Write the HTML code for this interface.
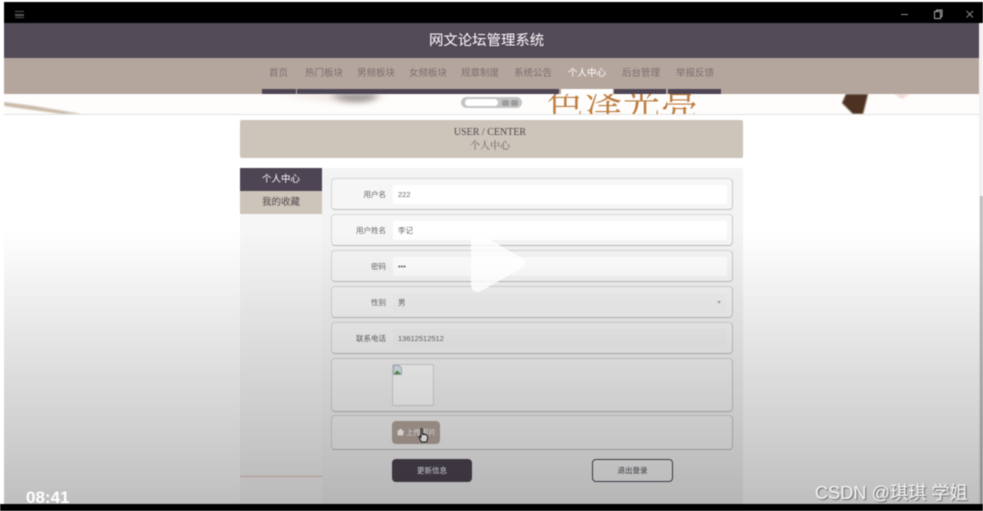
<!DOCTYPE html>
<html lang="zh">
<head>
<meta charset="utf-8">
<title>网文论坛管理系统</title>
<style>
html,body{margin:0;padding:0;width:983px;height:511px;overflow:hidden;background:#fff;font-family:"Liberation Sans","Noto Sans CJK SC",sans-serif}
*{box-sizing:border-box}
.a{position:absolute}
#stage{position:absolute;left:0;top:0;width:983px;height:511px;overflow:hidden;filter:blur(.55px)}
.nav{position:absolute;top:66px;font-size:9.5px;line-height:15px;color:#7a6f70;white-space:nowrap}
.seg{position:absolute;top:89px;height:5px;background:#4d4553}
.row{position:absolute;left:331px;width:402px;border:1.5px solid #d6d6d6;border-bottom-color:#bdbdbd;border-right-color:#c8c8c8;border-radius:4px;background:#f6f6f6}
.lab{position:absolute;left:331px;width:55px;text-align:right;font-size:7.500px;line-height:12px;color:#666;white-space:nowrap}
.inp{position:absolute;left:393px;width:334px;height:19px;background:#fff;font-size:7.500px;line-height:19px;color:#666;padding-left:5px}
.in2{background:#f3f3f3}
</style>
</head>
<body>
<div id="stage">
  <!-- top black bar -->
  <div class="a" style="left:4px;top:2px;width:979px;height:21px;background:#000"></div>
  <div class="a" style="left:15px;top:11px;width:9px;height:7px;border-top:1.5px solid #555;border-bottom:1.5px solid #555"></div>
  <div class="a" style="left:15px;top:14px;width:9px;height:1.5px;background:#555"></div>
  <svg class="a" style="left:895px;top:6px" width="85" height="16" viewBox="0 0 85 16">
    <path d="M6 8.500H13" stroke="#8a8a8a" stroke-width="1" fill="none"/>
    <path d="M39.500 5.500H45.500V12.500H39.500Z M41.500 5.500V4H47V10.500H45.500" stroke="#aaa" stroke-width="1" fill="none"/>
    <path d="M71.500 5L78 11.500M78 5L71.500 11.500" stroke="#8a8a8a" stroke-width="1" fill="none"/>
  </svg>

  <!-- header -->
  <div class="a" style="left:4px;top:23px;width:975px;height:35px;background:#524a57"></div>
  <div class="a" style="left:429px;top:23px;height:36px;color:#fff;font-size:14.400px;line-height:36px;white-space:nowrap">网文论坛管理系统</div>
  <div class="a" style="left:4px;top:58px;width:975px;height:36px;background:#b5a69d"></div>
  <div class="nav" style="left:269px">首页</div>
  <div class="nav" style="left:305px">热门板块</div>
  <div class="nav" style="left:357px">男频板块</div>
  <div class="nav" style="left:409px">女频板块</div>
  <div class="nav" style="left:461px">规章制度</div>
  <div class="nav" style="left:514px">系统公告</div>
  <div class="nav" style="left:568px;color:#fff">个人中心</div>
  <div class="nav" style="left:622px">后台管理</div>
  <div class="nav" style="left:676px">举报反馈</div>
  <div class="seg" style="left:262px;width:34px"></div>
  <div class="seg" style="left:297px;width:262px"></div>
  <div class="seg" style="left:561px;width:52px;background:#fff"></div>
  <div class="seg" style="left:614px;width:52px"></div>
  <div class="seg" style="left:668px;width:53px"></div>

  <!-- banner -->
  <div class="a" style="left:4px;top:94px;width:975px;height:21px;background:#fefdfc;border-bottom:1px solid #e2e2e2;overflow:hidden">
    <svg class="a" style="left:0;top:0" width="975" height="21" viewBox="0 0 975 21">
      <defs>
        <filter id="b1" x="-30%" y="-100%" width="160%" height="300%"><feGaussianBlur stdDeviation="3.500"/></filter>
        <filter id="b2"><feGaussianBlur stdDeviation=".8"/></filter>
      </defs>
      <path d="M0 8L0 12L58 20H78L30 12Z" fill="#c9b9a8" filter="url(#b2)"/>
      <path d="M270 0H385C375 6 345 9 320 6C300 4 285 2 270 0Z" fill="#f0e2dc" filter="url(#b1)"/>
      <path d="M325 0H375C372 7 355 9 338 6Z" fill="#8a8583" filter="url(#b1)"/>
      <path d="M842 0H864L859 20H849L838 9Z" fill="#4d3022" filter="url(#b2)"/>
      <path d="M890 0H906L898 5Z" fill="#f3d9d6" filter="url(#b2)"/>
    </svg>
    <div class="a" style="left:543px;top:-15px;font-family:'Noto Serif CJK SC','Liberation Serif',serif;font-size:37px;line-height:44px;color:#bc7b3e;white-space:nowrap;letter-spacing:1px">色泽光亮</div>
    <div class="a" style="left:457px;top:3px;width:61px;height:11px;border-radius:6px;background:#c4c4c4"></div>
    <div class="a" style="left:461px;top:5px;width:33px;height:7px;border-radius:4px;background:#fff"></div>
    <div class="a" style="left:498px;top:5.500px;width:7px;height:6px;border-radius:2px;background:#9d9d9d"></div>
    <div class="a" style="left:507px;top:5.500px;width:7px;height:6px;border-radius:2px;background:#9d9d9d"></div>
  </div>

  <!-- scrollbar -->
  <div class="a" style="left:979px;top:23px;width:4px;height:481px;background:#f1f1f1"></div>
  <div class="a" style="left:980px;top:196px;width:3px;height:308px;background:#bdbdbd"></div>

  <!-- title block -->
  <div class="a" style="left:240px;top:120px;width:503px;height:38px;background:#cdc4ba;border-radius:2px;text-align:center;color:#50484f;font-family:'Liberation Serif','Noto Serif CJK SC',serif;font-size:10px;line-height:14px;padding-top:6px;padding-right:3px">USER / CENTER<br><span style="color:#6a6265">个人中心</span></div>

  <!-- panels -->
  <div class="a" style="left:240px;top:168px;width:503px;height:336px;background:#f8f8f8"></div>
  <div class="a" style="left:322px;top:168px;width:421px;height:336px;background:#f3f3f3"></div>
  <div class="a" style="left:240px;top:168px;width:82px;height:309px;background:#f6f6f6;border-bottom:1px solid #e8b9b9"></div>
  <div class="a" style="left:240px;top:168px;width:82px;height:23px;background:#4d4553;color:#fff;font-size:9.500px;line-height:24px;text-align:center">个人中心</div>
  <div class="a" style="left:240px;top:191px;width:82px;height:23px;background:#cdc4ba;color:#514a4c;font-size:9.500px;line-height:24px;text-align:center">我的收藏</div>

  <!-- form rows -->
  <div class="row" style="top:178px;height:32px"></div>
  <div class="row" style="top:214px;height:32px"></div>
  <div class="row" style="top:250px;height:32px"></div>
  <div class="row" style="top:286px;height:32px"></div>
  <div class="row" style="top:322px;height:32px"></div>
  <div class="row" style="top:358px;height:54px"></div>
  <div class="row" style="top:415px;height:35px"></div>

  <div class="lab" style="top:189px">用户名</div>
  <div class="inp" style="top:185px">222</div>
  <div class="lab" style="top:225px">用户姓名</div>
  <div class="inp" style="top:221px">李记</div>
  <div class="lab" style="top:261px">密码</div>
  <div class="inp" style="top:257px">•••</div>
  <div class="lab" style="top:297px">性别</div>
  <div class="inp in2" style="top:293px">男</div>
  <div class="a" style="left:717px;top:301px;width:0;height:0;border-left:2.500px solid transparent;border-right:2.500px solid transparent;border-top:3px solid #aaa"></div>
  <div class="lab" style="top:333px">联系电话</div>
  <div class="inp in2" style="top:329px">13612512512</div>

  <!-- broken image -->
  <div class="a" style="left:392px;top:364px;width:42px;height:42px;background:#fff;border:1px solid #d6d6d6;border-radius:2px"></div>
  <svg class="a" style="left:393px;top:365px" width="9" height="10" viewBox="0 0 9 10">
    <path d="M.5 .5H6L8.500 3V9.500H.5Z" fill="#dfe6f2" stroke="#9aa3b2" stroke-width=".7"/>
    <path d="M1 9L4 5.500L8 9Z" fill="#4f9a3f"/>
  </svg>

  <!-- upload button -->
  <div class="a" style="left:392px;top:421px;width:48px;height:23px;background:#b5a69d;border-radius:4px;color:#fff;font-size:7.500px;line-height:23px;padding-left:14px;white-space:nowrap">上传图片</div>
  <svg class="a" style="left:396px;top:428px" width="9" height="8" viewBox="0 0 9 8">
    <path d="M4.500 .5L8.500 4H7.300V7.500H1.700V4H.5Z" fill="#fff"/>
  </svg>
  <svg class="a" style="left:418px;top:428px" width="11" height="15" viewBox="0 0 11 15">
    <path d="M3 1.500C3 .5 4.500 .5 4.500 1.500V6.500L6 6V6.500L7.500 6.500L9.500 7.500V11L8.500 14H3.500L1 9.500C.5 8.500 1.800 8 2.500 9L3 10Z" fill="#fff" stroke="#222" stroke-width="1"/>
  </svg>

  <!-- action buttons -->
  <div class="a" style="left:392px;top:459px;width:80px;height:23px;background:#4d4553;border-radius:4px;color:#fff;font-size:7.500px;line-height:24px;text-align:center">更新信息</div>
  <div class="a" style="left:592px;top:459px;width:81px;height:23px;background:#f6f6f6;border:1.500px solid #4d4553;border-radius:4px;color:#4d4553;font-size:7.500px;line-height:21px;text-align:center">退出登录</div>

  <!-- video overlay gradient -->
  <div class="a" style="left:0;top:230px;width:983px;height:274px;background:linear-gradient(to bottom,rgba(0,0,0,0) 0%,rgba(0,0,0,.1) 40%,rgba(0,0,0,.25) 100%)"></div>

  <!-- play button -->
  <svg class="a" style="left:466px;top:228px" width="66" height="70" viewBox="0 0 66 70">
    <path d="M5 14C5 7 11 4 17 8L56 30C60 33 60 37 56 40L17 62C11 66 5 63 5 56Z" fill="#fff" fill-opacity=".8"/>
  </svg>

  <!-- bottom bar -->
  <div class="a" style="left:0;top:504px;width:983px;height:7px;background:#000"></div>
  <div class="a" style="left:0;top:0;width:4px;height:504px;background:#fff"></div>
  <div class="a" style="left:0;top:0;width:983px;height:504px;overflow:hidden;pointer-events:none">
    <div class="a" style="left:26px;top:488px;font-size:17px;line-height:20px;font-weight:bold;color:#fff;white-space:nowrap">08:41</div>
    <div class="a" style="left:815px;top:482px;font-size:18.200px;line-height:22px;color:#f4f4f4;white-space:nowrap;text-shadow:1px 1px 1px #666">CSDN @琪琪 学姐</div>
  </div>
</div>
</body>
</html>
